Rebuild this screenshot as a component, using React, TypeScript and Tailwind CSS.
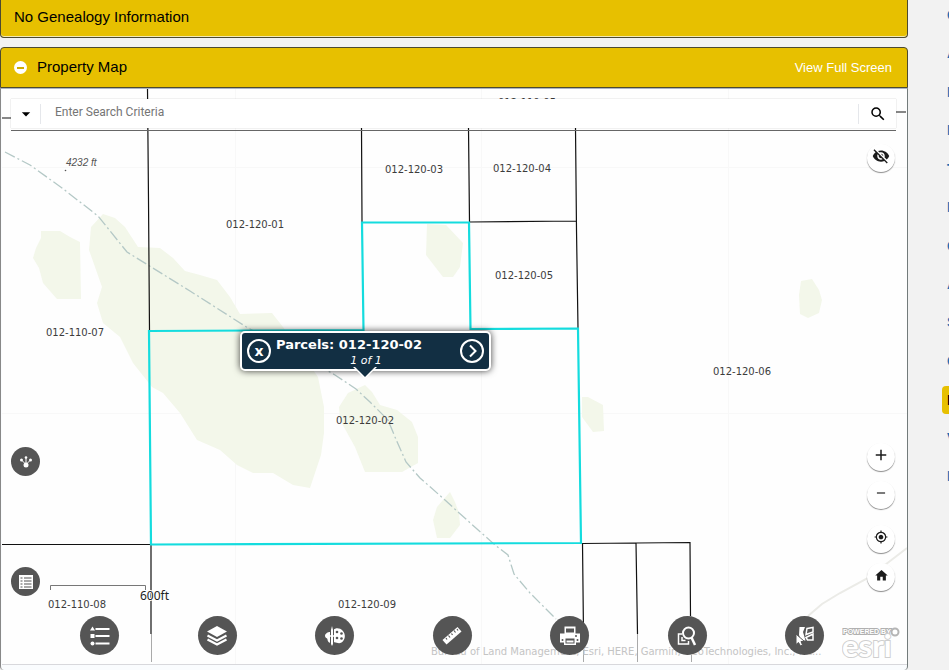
import type { ReactNode } from "react";
import { MdAdd, MdArrowDropDown, MdHome, MdMyLocation, MdRemove, MdSearch, MdVisibilityOff } from "react-icons/md";

const sideLinks = ["C", "A", "L", "L", "T", "L", "C", "A", "S", "C", "L", "V", "L"];

const parcelLabels = [
  { id: "012-110-05", x: 527, y: 106 },
  { id: "012-120-03", x: 414, y: 173 },
  { id: "012-120-04", x: 522, y: 172 },
  { id: "012-120-01", x: 255, y: 228 },
  { id: "012-120-05", x: 524, y: 279 },
  { id: "012-110-07", x: 75, y: 336 },
  { id: "012-120-06", x: 742, y: 375 },
  { id: "012-120-02", x: 365, y: 424 },
  { id: "012-110-08", x: 77, y: 608 },
  { id: "012-120-09", x: 367, y: 608 },
];

const vegetation = [
  "41,231 60,231 70,237 80,242 81,299 57,299 43,283 39,268 33,258 36,248 41,238",
  "103,214 115,218 125,227 138,247 160,248 173,258 185,271 200,275 217,280 230,297 240,314 272,313 283,327 318,377 324,407 324,433 321,455 310,488 293,485 273,473 253,473 237,465 220,450 197,440 180,413 163,393 152,387 133,363 120,337 103,323 97,303 102,287 95,267 89,250 91,227",
  "365,385 372,392 380,405 397,410 412,422 418,437 418,463 402,472 365,472 355,447 340,420 339,407 348,393",
  "450,492 455,502 459,513 460,525 450,538 437,538 433,520 437,507",
  "427,224 446,225 463,243 460,267 453,277 443,277 426,255",
  "582,397 588,397 603,405 604,431 593,432 582,417",
  "801,281 812,279 819,290 822,300 819,313 808,318 800,314 799,295",
];

function ParcelMap() {
  return (
    <svg className="absolute inset-0 h-full w-full" viewBox="2 89 905 575" preserveAspectRatio="xMinYMin slice">
      <rect x="2" y="89" width="905" height="575" fill="#fefefe" />
      <g stroke="#f8f8f8">
        <path d="M2 413.5H907M2 167.5H907M235.5 89V664M481.5 89V664M728.5 89V664" />
      </g>
      <g fill="#f3f7ea">
        {vegetation.map(points => <polygon key={points} points={points} />)}
      </g>
      <path d="M907 548L868 578L840 593L822 604L808 616" fill="none" stroke="#ebebe7" strokeWidth="2" />
      <polyline
        points="5,152 30,165 62,188 98,216 127,252 148,265 190,291 248,328 300,355 335,375 356,389 370,402 388,420 395,437 406,462 420,478 445,500 458,512 495,545 508,555 514,574 530,593 556,619"
        fill="none"
        stroke="#b4c8c6"
        strokeWidth="1.3"
        strokeDasharray="11 3 2 3"
      />
      <g fill="none" stroke="#111" strokeWidth="1.2">
        <path d="M147.5 89L148.5 200L149.5 330M151 545V634" />
        <path d="M2 118H12M896 112H906M2 544.5H151" />
        <path d="M361.5 128L362 222M468.5 128L469.5 222L576.5 221M575.5 128L576.5 230L578 328" />
        <path d="M582 543.5L690 542.5L690.5 616M636 543L637.5 634M582.5 543L583.5 634" />
      </g>
      <path d="M151.5 634V662M583.5 650V662M637.5 634V662M691.5 655V662" fill="none" stroke="#aaa" />
      <path d="M149 331L363.5 330L362 222.5L469 222.5L470.5 329L578 328.5L581 543L151 544.5Z" fill="none" stroke="#14dcde" strokeWidth="2.2" />
      <g fontFamily="DejaVu Sans, Verdana, sans-serif" fontSize="10" fill="#3c3c3c" textAnchor="middle">
        {parcelLabels.map(label => <text key={label.id} x={label.x} y={label.y}>{label.id}</text>)}
      </g>
      <text x="66" y="166" fontFamily="Liberation Sans, Arial, sans-serif" fontSize="10" fontStyle="italic" fill="#555">4232 ft</text>
      <circle cx="65.500" cy="170.500" r="0.8" fill="#555" />
      <path d="M50.5 590V585.5H145.500V590" fill="none" stroke="#777" />
      <text x="140" y="600" fontFamily="Noto Sans, Open Sans, sans-serif" fontSize="12" fill="#222" stroke="#fff" strokeWidth="2" paintOrder="stroke">600ft</text>
      <text x="431" y="655" fontFamily="DejaVu Sans, Verdana, sans-serif" fontSize="10" fill="#c4c4c4">
        Bureau of Land Management, Esri, HERE, Garmin, GeoTechnologies, Inc., Int...
      </text>
    </svg>
  );
}

function EsriLogo() {
  return (
    <svg viewBox="0 0 60 36" className="h-9 w-[60px]" role="img" aria-label="Powered by Esri">
      <text x="1" y="9" fontFamily="Liberation Sans, Arial, sans-serif" fontSize="7" fontWeight="bold" fill="#fff" stroke="#b0b0b0" strokeWidth="2" paintOrder="stroke">POWERED BY</text>
      <text x="0" y="32" fontFamily="Lato, sans-serif" fontSize="31" fontWeight="bold" fill="#fff" stroke="#cfcfcf" strokeWidth="2" paintOrder="stroke">esri</text>
      <circle cx="53" cy="7" r="3.500" fill="#fff" stroke="#b5b5b5" strokeWidth="2" />
    </svg>
  );
}

function LegendIcon() {
  return (
    <svg viewBox="0 0 24 24" className="size-6" fill="currentColor">
      <path d="M4.500 2.500L7 6.500H2ZM2.500 10h4v4h-4ZM7.500 4h14v2h-14ZM7.500 11h14v2h-14ZM7.500 18.500h14v2h-14Z" />
      <circle cx="4.500" cy="19.500" r="2" />
    </svg>
  );
}

function LayersIcon() {
  return (
    <svg viewBox="0 0 24 24" className="size-6">
      <path d="M12 2L22 7.500L12 13L2 7.500Z" fill="currentColor" />
      <path d="M2.500 11.500L12 16.500L21.500 11.500M2.500 15.500L12 20.500L21.500 15.500" fill="none" stroke="currentColor" strokeWidth="2.200" />
    </svg>
  );
}

function DrawIcon() {
  return (
    <svg viewBox="0 0 24 24" className="size-6">
      <path d="M10 6C13 3.500 17 4 19.500 6.500C23 10 22.500 16 18.500 18.500C15 20.500 13 17.500 10.500 18.500C7 20 4.500 18 4.500 15.500C4.500 14 2 14 2 12C2 9.500 5 8 7 8Z" fill="currentColor" />
      <g fill="#555">
        <circle cx="14" cy="8" r="1.300" />
        <circle cx="18.500" cy="9.500" r="1.300" />
        <circle cx="18.500" cy="14.500" r="1.300" />
        <circle cx="14" cy="14" r="1.300" />
      </g>
      <path d="M9 4V20" stroke="#555" strokeWidth="4" />
      <path d="M9 2L10 6V20L9 22L8 20V6Z" fill="currentColor" />
      <path d="M4 12H12" stroke="currentColor" strokeWidth="1.500" />
    </svg>
  );
}

function RulerIcon() {
  return (
    <svg viewBox="0 0 24 24" className="size-6">
      <path d="M17.500 3L21.500 7.500L6.500 20.500L2.500 16Z" fill="currentColor" />
      <path d="M6 14L7 15.500M8.500 11.500L10 13.500M11.500 9.500L12.500 11M14 6.500L15.500 8.500M17 5L18 6.500" stroke="#555" strokeWidth="1.200" />
    </svg>
  );
}

function PrintIcon() {
  return (
    <svg viewBox="0 0 24 24" className="size-6">
      <path d="M2 9.500H22V18.500H18V21H6V18.500H2ZM6.500 2.500H17.500V10H6.500Z" fill="currentColor" />
      <path d="M8 4.500H16V8.500H8ZM7.500 14.500H16.500V19.500H7.500Z" fill="#555" />
      <path d="M8.500 16.500H15.500V18.500H8.500Z" fill="currentColor" />
      <circle cx="4.500" cy="16" r="1" fill="#555" />
      <circle cx="19.500" cy="16" r="1" fill="#555" />
      <circle cx="18" cy="12" r="1" fill="#555" />
    </svg>
  );
}

function QueryIcon() {
  return (
    <svg viewBox="0 0 24 24" className="size-6" fill="none" stroke="currentColor">
      <path d="M7 10H3.500V20H13.500V17M7 13V16.500H10.500" strokeWidth="1.500" />
      <circle cx="13.500" cy="9" r="5.500" strokeWidth="2" />
      <path d="M16.500 13.500L20 21" strokeWidth="2.500" />
    </svg>
  );
}

function SelectIcon() {
  return (
    <svg viewBox="0 0 24 24" className="size-6">
      <path d="M6.500 3H12L10 8L12.500 16.500H8L6 11Z" fill="currentColor" />
      <path d="M14 4.500L20 3.500V8L13 10.500ZM13 13.500L20 10V16H14.500Z" fill="none" stroke="currentColor" strokeWidth="1.500" />
      <path d="M3 10V20.500L5.500 18.500L7.500 22L9.500 21L8 17.500H11.500Z" fill="currentColor" stroke="#555" strokeWidth="1" />
    </svg>
  );
}

function ShareIcon() {
  return (
    <svg viewBox="0 0 16 16" className="size-4" fill="currentColor">
      <path d="M8 4V10M4 6.500L8 10.500L12 6.500" fill="none" stroke="currentColor" />
      <circle cx="8" cy="3.500" r="1.300" />
      <circle cx="3.500" cy="6" r="1.500" />
      <circle cx="12.500" cy="6" r="1.500" />
      <circle cx="8" cy="11" r="2.500" />
    </svg>
  );
}

function ListIcon() {
  return (
    <svg viewBox="0 0 16 16" className="size-4">
      <path d="M1 1H15V15H1Z" fill="currentColor" />
      <path d="M2.500 4H4.500M6 4H13.500M2.500 7H4.500M6 7H13.500M2.500 10H4.500M6 10H13.500M2.500 13H4.500M6 13H13.500" stroke="#555" strokeWidth="1.200" />
    </svg>
  );
}

const tools = [
  { name: "Legend", icon: <LegendIcon /> },
  { name: "Layers", icon: <LayersIcon /> },
  { name: "Draw", icon: <DrawIcon /> },
  { name: "Measure", icon: <RulerIcon /> },
  { name: "Print", icon: <PrintIcon /> },
  { name: "Query", icon: <QueryIcon /> },
  { name: "Select", icon: <SelectIcon /> },
];

function RoundButton({ label, children }: { label: string; children: ReactNode }) {
  return (
    <button aria-label={label} className="flex size-7 items-center justify-center rounded-full bg-white pb-1 text-[#1c1c1c] shadow-[0_1px_1px_rgba(0,0,0,0.45)]">
      {children}
    </button>
  );
}

function SearchBar() {
  return (
    <form className="absolute top-[10px] right-[11px] left-[9px] h-8 border-b border-[#666]" onSubmit={e => e.preventDefault()}>
      <div className="flex h-[29px] items-center bg-white shadow-[0_0_1px_rgba(0,0,0,0.3)]">
        <button type="button" aria-label="Search source" className="flex h-5 w-[30px] items-center justify-center border-r border-gray-200">
          <MdArrowDropDown className="size-5" />
        </button>
        <input aria-label="Search" placeholder="Enter Search Criteria" className="h-5 min-w-0 flex-1 px-[14px] pb-1 font-[Roboto,Arial,sans-serif] text-[12px] outline-none placeholder:text-[#757575]" />
        <button aria-label="Run search" className="flex h-5 w-[38px] items-center justify-center border-l border-gray-200">
          <MdSearch className="size-[18px]" />
        </button>
      </div>
    </form>
  );
}

function Popup() {
  return (
    <div className="absolute top-[242px] left-[238px] flex h-10 w-[251px] items-center rounded-[5px] border-2 border-white bg-[#122f43] px-[5px] font-['DejaVu_Sans',Verdana,sans-serif] text-white shadow-[0_0_7px_rgba(0,0,0,0.75)]">
      <button aria-label="Close" className="flex size-6 shrink-0 items-center justify-center rounded-full border-2 border-white pb-px text-[14px] leading-none font-bold">x</button>
      <div className="flex-1 pt-1 pl-[5px]">
        <div className="text-[13px] leading-4 font-bold whitespace-nowrap">Parcels: 012-120-02</div>
        <div className="pr-1 text-center text-[11px] leading-4 italic">1 of 1</div>
      </div>
      <button aria-label="Next" className="flex size-6 shrink-0 items-center justify-center rounded-full border-2 border-white">
        <svg viewBox="0 0 16 16" className="size-4" fill="none" stroke="currentColor" strokeWidth="2">
          <path d="M6 2.500L11.500 8L6 13.500" />
        </svg>
      </button>
      <svg viewBox="0 0 24 12" className="absolute top-[34px] left-[111px] h-3 w-6">
        <path d="M0 0L12 12L24 0" fill="#fff" />
        <path d="M2 0L12 10L22 0" fill="#122f43" />
      </svg>
    </div>
  );
}

export default function App() {
  return (
    <div className="flex h-screen min-h-[480px] overflow-hidden bg-[#f2f2f2] font-['Liberation_Sans',Arial,sans-serif] text-black">
      <main className="flex min-w-0 flex-1 flex-col">
        <header className="mb-[9px] flex h-[38px] items-center rounded-b border border-t-0 border-[#4d4a30] bg-[#e7c000] px-[13px] pb-[3px] shadow-[inset_0_-1px_0_#f3e9b5]">
          <h2 className="text-[15px]">No Genealogy Information</h2>
        </header>

        <section className="flex flex-1 flex-col">
          <header className="flex h-[41px] items-center rounded-t border border-[#4d4a30] bg-[#e7c000] pr-[15px] pl-[13px]">
            <button aria-label="Collapse" className="flex size-[13px] items-center justify-center rounded-full bg-white">
              <span className="h-[2px] w-[7px] bg-[#d0ad00]" />
            </button>
            <h2 className="ml-[10px] text-[15px]">Property Map</h2>
            <a href="#map" className="ml-auto text-[13px] text-white">View Full Screen</a>
          </header>

          <div className="flex flex-1 flex-col rounded-b border-x border-t border-t-[#aab4c4] border-r-[#737b7b] border-l-[#888] bg-[#fafcfe] pb-[5px] pl-px">
            <div id="map" className="relative flex-1 overflow-hidden border-b border-[#d8d8dc]">
              <ParcelMap />
              <SearchBar />
              <div className="absolute top-[55px] right-3">
                <RoundButton label="Hide controls"><MdVisibilityOff className="size-[18px]" /></RoundButton>
              </div>
              <Popup />

              <div className="absolute bottom-[68px] left-[9px] flex flex-col gap-[91px] text-white">
                <button aria-label="Share" className="flex size-[29px] items-center justify-center rounded-full bg-[#555]"><ShareIcon /></button>
                <button aria-label="List" className="flex size-[29px] items-center justify-center rounded-full bg-[#555]"><ListIcon /></button>
              </div>

              <div className="absolute right-3 bottom-[73px] flex flex-col gap-4">
                <div className="flex flex-col gap-[10px]">
                  <RoundButton label="Zoom in"><MdAdd className="size-[18px]" /></RoundButton>
                  <RoundButton label="Zoom out"><MdRemove className="size-[14px]" /></RoundButton>
                </div>
                <div className="flex flex-col gap-[10px]">
                  <RoundButton label="My location"><MdMyLocation className="size-[14px]" /></RoundButton>
                  <RoundButton label="Home"><MdHome className="size-[15px]" /></RoundButton>
                </div>
              </div>

              <div className="absolute right-[83px] bottom-[9px] left-[78px] flex justify-between">
                {tools.map(tool => (
                  <button key={tool.name} aria-label={tool.name} className="flex size-[39px] items-center justify-center rounded-full bg-[#555] text-white">
                    {tool.icon}
                  </button>
                ))}
              </div>
              <div className="absolute right-[5px] bottom-[3px]">
                <EsriLogo />
              </div>
            </div>
          </div>
        </section>
      </main>

      <nav className="-mt-1 flex h-[500px] w-[41px] shrink-0 flex-col overflow-hidden pl-[34px] text-[14px] font-bold text-[#1b6fb5]">
        {sideLinks.map((letter, i) => (
          <div key={i} className="flex flex-1 items-center">
            {i === 10
              ? <a href="#map" aria-current="page" className="rounded-[4px] bg-[#e7c000] py-[6px] pr-8 pl-[5px] leading-4 text-black">{letter}</a>
              : <a href="#map" className="pl-[5px]">{letter}</a>}
          </div>
        ))}
      </nav>
    </div>
  );
}
